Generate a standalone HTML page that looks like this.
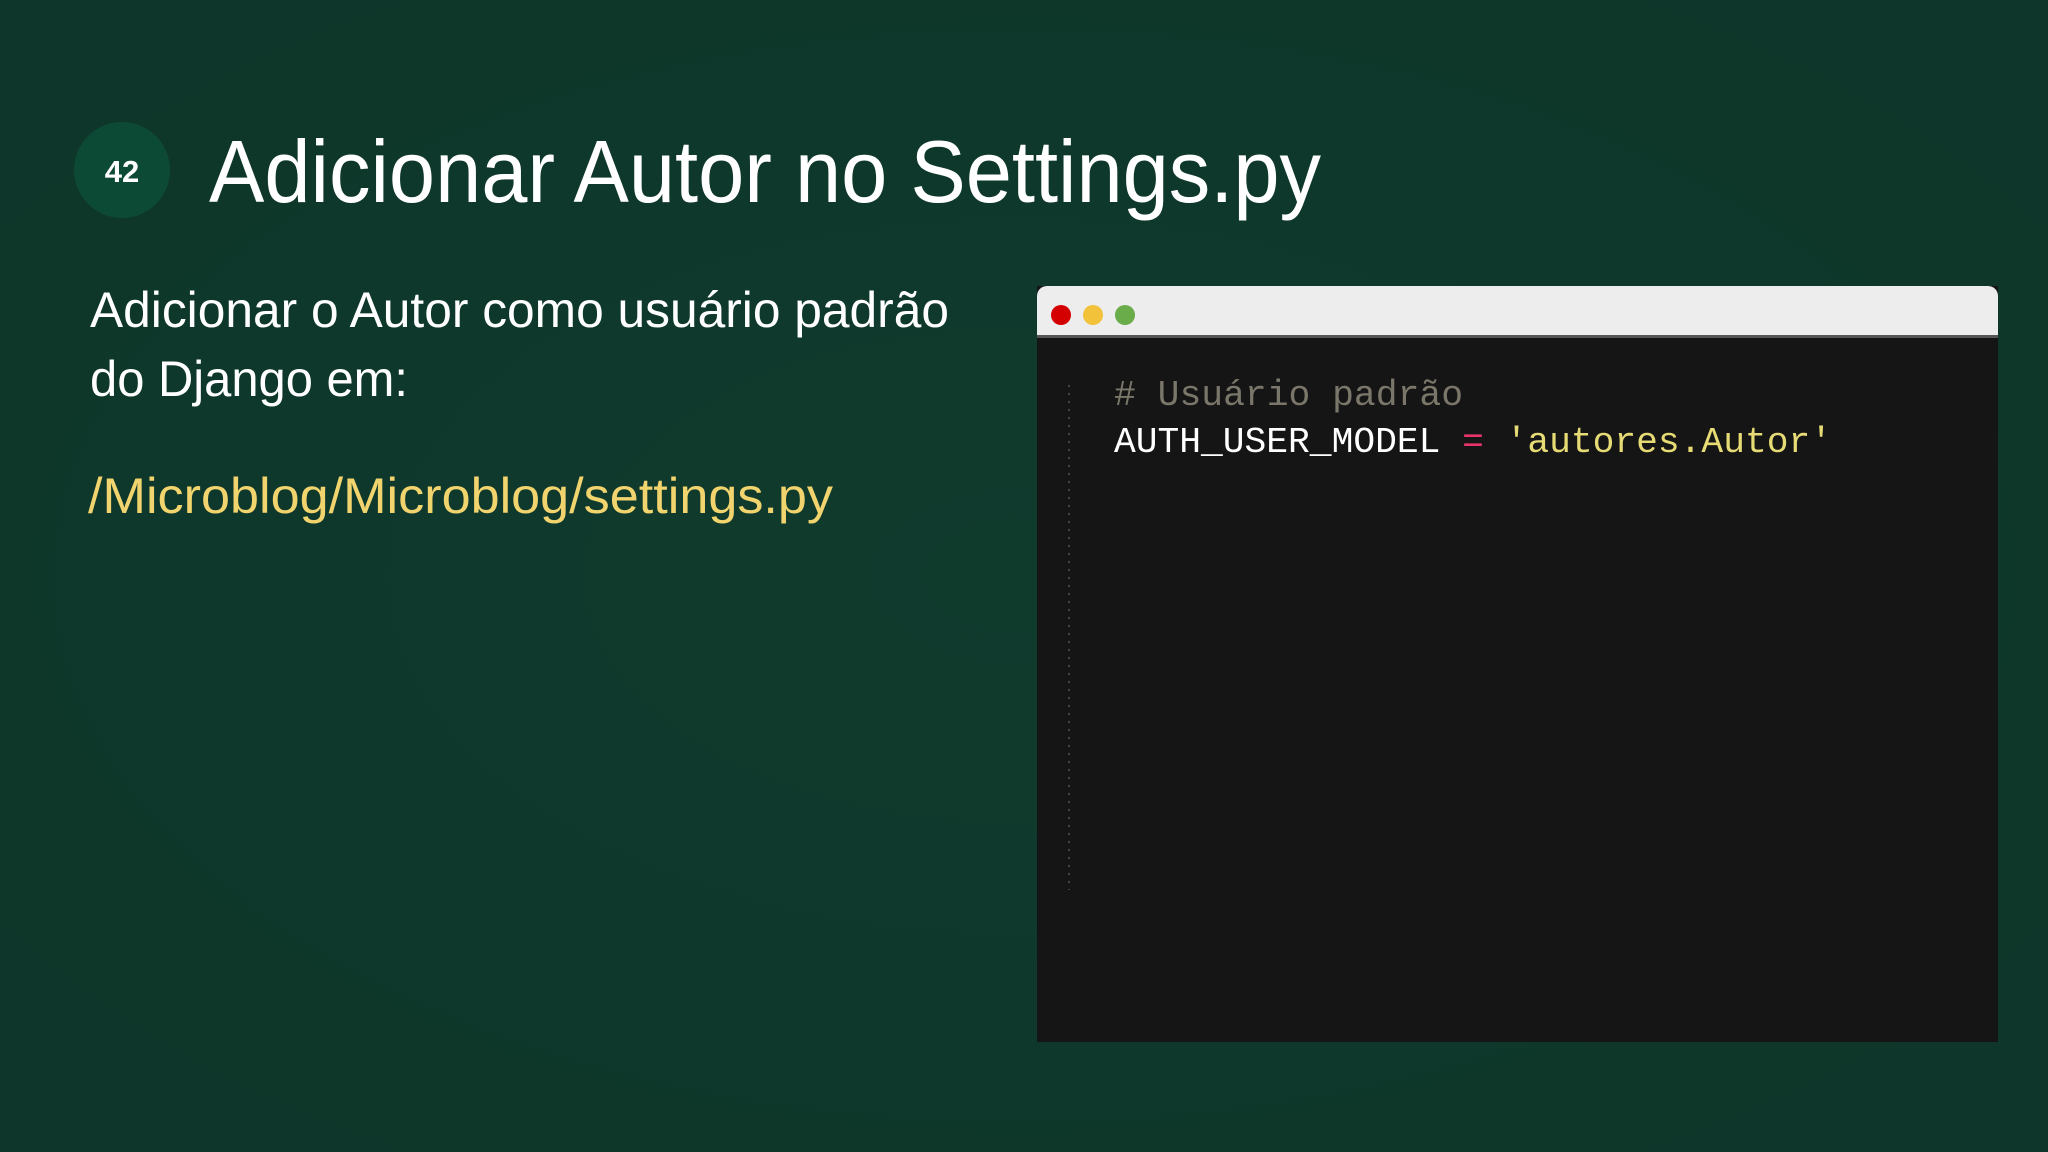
<!DOCTYPE html>
<html><head><meta charset="utf-8"><style>
html,body{margin:0;padding:0;width:2048px;height:1152px;overflow:hidden;background:#0f392b;}
svg{display:block}
</style></head><body>
<svg width="2048" height="1152" viewBox="0 0 2048 1152" xmlns="http://www.w3.org/2000/svg">
<defs>
<radialGradient id="bg" cx="0.5" cy="0.5" r="0.8">
<stop offset="0" stop-color="#0f3b2d"/><stop offset="1" stop-color="#0e3529"/>
</radialGradient>
</defs>
<rect width="2048" height="1152" fill="url(#bg)"/>
<circle cx="122" cy="170" r="48" fill="#0d4a35"/>
<text x="122" y="182" font-family="Liberation Sans, sans-serif" font-weight="bold" font-size="31" fill="#fff" text-anchor="middle">42</text>
<text x="209" y="202" font-family="Liberation Sans, sans-serif" font-size="88" fill="#fff" textLength="1112" lengthAdjust="spacingAndGlyphs">Adicionar Autor no Settings.py</text>
<text x="90" y="327" font-family="Liberation Sans, sans-serif" font-size="50" fill="#fff" textLength="859" lengthAdjust="spacingAndGlyphs">Adicionar o Autor como usuário padrão</text>
<text x="90" y="396" font-family="Liberation Sans, sans-serif" font-size="50" fill="#fff" textLength="318" lengthAdjust="spacingAndGlyphs">do Django em:</text>
<text x="88" y="513" font-family="Liberation Sans, sans-serif" font-size="50" fill="#f2d46e" textLength="745" lengthAdjust="spacingAndGlyphs">/Microblog/Microblog/settings.py</text>
<rect x="1037" y="286" width="961" height="756" fill="#151515"/>
<path d="M1037 337 V296 a10 10 0 0 1 10 -10 H1988 a10 10 0 0 1 10 10 V337 Z" fill="#ededed"/>
<rect x="1037" y="335" width="961" height="3" fill="#555"/>
<ellipse cx="1061" cy="315" rx="10" ry="10" fill="#d40000"/>
<ellipse cx="1093" cy="315" rx="10" ry="10" fill="#f2c23a"/>
<ellipse cx="1125" cy="315" rx="10" ry="10" fill="#6aab4a"/>
<line x1="1069" y1="385" x2="1069" y2="890" stroke="#444" stroke-width="2" stroke-dasharray="2 6"/>
<text x="1114" y="405" font-family="Liberation Mono, monospace" font-size="36" fill="#7a776a" textLength="349" lengthAdjust="spacingAndGlyphs"># Usuário padrão</text>
<text x="1114" y="452" font-family="Liberation Mono, monospace" font-size="36" fill="#fff" textLength="718" lengthAdjust="spacingAndGlyphs">AUTH_USER_MODEL <tspan fill="#e8336b">=</tspan> <tspan fill="#e6db74">'autores.Autor'</tspan></text>
</svg>
</body></html>
